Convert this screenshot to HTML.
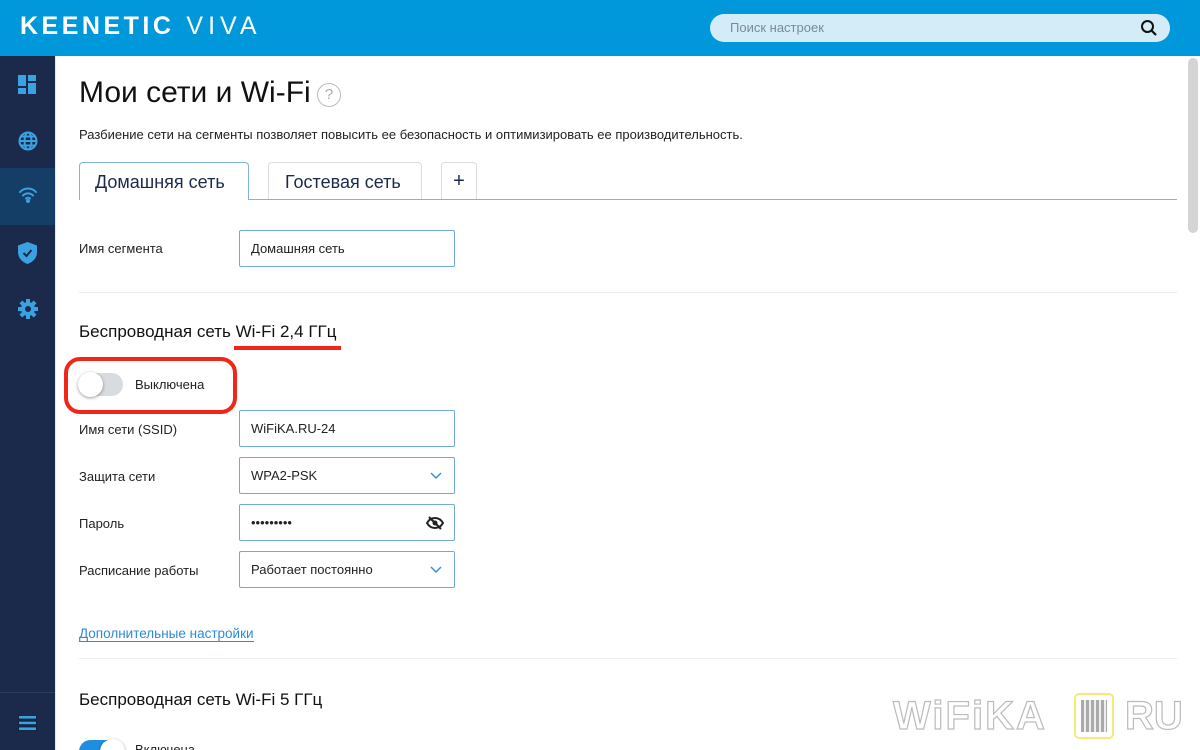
<!DOCTYPE html>
<html style="width:1200px;height:750px;overflow:hidden"><head><meta charset="utf-8"><style>
*{margin:0;padding:0;box-sizing:border-box}
body{width:1200px;height:750px;overflow:hidden;background:#fff;font-family:"Liberation Sans",Arial,sans-serif;color:#1a1a1a;position:relative}
.hdr{position:absolute;left:0;top:0;width:1200px;height:56px;background:#0098db}
.logo{position:absolute;left:20px;top:12px;color:#fff;font-size:25px;font-weight:bold;letter-spacing:3.5px}
.logo span{font-weight:normal;margin-left:12px;letter-spacing:5px}
.search{position:absolute;left:710px;top:14px;width:460px;height:28px;border-radius:14px;background:#d3ecf8;color:#7a8a99;font-size:13px;line-height:28px;padding-left:20px}
.side{position:absolute;left:0;top:56px;width:56px;height:694px;background:#1b2a4a;border-right:1px solid #e3e8ef}
.act{position:absolute;left:0;top:112px;width:55px;height:57px;background:#143e66}
.ic{position:absolute;left:18px}
.abs{position:absolute}
.lbl{position:absolute;left:79px;font-size:13px;color:#222}
.inp{position:absolute;left:239px;width:216px;height:37px;border:1px solid #6fa9e0;border-radius:2px;font-size:13px;line-height:35px;padding-left:11px;color:#222}
.chev{position:absolute;right:12px;top:11px}
.hr{position:absolute;left:79px;width:1098px;height:1px;background:#ececec}
</style></head><body>
<div class="hdr"><div class="logo">KEENETIC<span>VIVA</span></div>
<div class="search">Поиск настроек
<svg class="abs" style="right:12px;top:5px" width="18" height="18" viewBox="0 0 18 18"><circle cx="7.5" cy="7.5" r="5.5" fill="none" stroke="#111" stroke-width="2"/><path d="M11.5 11.5L16 16" stroke="#111" stroke-width="2.2"/></svg></div></div>
<div class="side">
<svg class="ic" style="top:19px" width="19" height="19" viewBox="0 0 19 19" fill="#3aa2e0"><rect x="0" y="0" width="8" height="11"/><rect x="10" y="0" width="8" height="6"/><rect x="0" y="13" width="8" height="6"/><rect x="10" y="8" width="8" height="11"/></svg>
<svg class="ic" style="top:75px" width="20" height="20" viewBox="0 0 20 20" fill="none" stroke="#3aa2e0" stroke-width="2"><circle cx="10" cy="10" r="8.5"/><ellipse cx="10" cy="10" rx="3.5" ry="8.5"/><path d="M1.5 10h17M3 5.5h14M3 14.5h14"/></svg>
<div class="act"></div>
<svg class="ic" style="top:131px" width="20" height="16" viewBox="0 0 20 16" fill="none" stroke="#3aa2e0" stroke-width="2" stroke-linecap="round"><path d="M2 5a11 11 0 0 1 16 0M5 8.5a7 7 0 0 1 10 0M8 11.5a3 3 0 0 1 4 0"/><circle cx="10" cy="14" r="1" fill="#3aa2e0"/></svg>
<svg class="ic" style="top:186px" width="19" height="22" viewBox="0 0 19 22"><path d="M9.5 0L19 3.5V10c0 6-4 10-9.5 12C4 20 0 16 0 10V3.5z" fill="#3aa2e0"/><path d="M5.5 11l3 3 5-6" stroke="#1b2a4a" stroke-width="2" fill="none"/></svg>
<svg class="ic" style="top:243px" width="20" height="20" viewBox="0 0 20 20"><g fill="#3aa2e0"><circle cx="10" cy="10" r="7"/><rect x="8" y="0" width="4" height="20"/><rect x="0" y="8" width="20" height="4"/><rect x="8" y="0" width="4" height="20" transform="rotate(45 10 10)"/><rect x="8" y="0" width="4" height="20" transform="rotate(-45 10 10)"/></g><circle cx="10" cy="10" r="3" fill="#1b2a4a"/></svg>
<div class="abs" style="left:0;top:636px;width:55px;height:1px;background:#2d3d5c"></div>
<svg class="ic" style="top:659px" width="19" height="16" viewBox="0 0 19 16" fill="#3aa2e0" stroke="#0d1a30" stroke-width="0.8"><rect x="0.5" y="0.5" width="18" height="3.5" rx="1"/><rect x="0.5" y="6.2" width="18" height="3.5" rx="1"/><rect x="0.5" y="12" width="18" height="3.5" rx="1"/></svg>
</div>
<div class="abs" style="left:1188px;top:58px;width:10px;height:175px;background:#d4d4d4;border-radius:5px"></div>

<div class="abs" style="left:79px;top:76px;font-size:30px;color:#111">Мои сети и Wi-Fi</div>
<div class="abs" style="left:317px;top:83px;width:24px;height:24px;border:1.5px solid #bbb;border-radius:50%;color:#aaa;font-size:15px;text-align:center;line-height:21px">?</div>
<div class="abs" style="left:79px;top:127px;font-size:13px;color:#222;white-space:nowrap">Разбиение сети на сегменты позволяет повысить ее безопасность и оптимизировать ее производительность.</div>

<div class="abs" style="left:248px;top:199px;width:929px;height:1px;background:#7fb3e3"></div>
<div class="abs" style="left:79px;top:162px;width:170px;height:38px;border:1px solid #7fb3e3;border-bottom:none;border-radius:4px 4px 0 0;background:#fff;font-size:18px;line-height:38px;padding-left:15px;color:#1b2a4a">Домашняя сеть</div>
<div class="abs" style="left:268px;top:162px;width:154px;height:37px;border:1px solid #ddd;border-bottom:none;border-radius:4px 4px 0 0;font-size:18px;line-height:38px;padding-left:16px;color:#1b2a4a">Гостевая сеть</div>
<div class="abs" style="left:441px;top:162px;width:36px;height:37px;border:1px solid #ddd;border-bottom:none;border-radius:4px 4px 0 0;font-size:20px;line-height:36px;text-align:center;color:#1b2a4a">+</div>

<div class="lbl" style="top:241px">Имя сегмента</div>
<div class="inp" style="top:230px">Домашняя сеть</div>
<div class="hr" style="top:292px"></div>

<div class="abs" style="left:79px;top:322px;font-size:17px;color:#111">Беспроводная сеть Wi-Fi 2,4 ГГц</div>
<div class="abs" style="left:234px;top:346px;width:107px;height:4px;background:#f0261b"></div>
<div class="abs" style="left:64px;top:357px;width:173px;height:57px;border:4px solid #f0261b;border-radius:16px"></div>
<div class="abs" style="left:79px;top:373px;width:44px;height:23px;border-radius:12px;background:#d8dbe0"></div>
<div class="abs" style="left:78px;top:372px;width:25px;height:25px;border-radius:50%;background:#fff;box-shadow:0 1px 3px rgba(0,0,0,.4)"></div>
<div class="abs" style="left:135px;top:377px;font-size:13px;color:#222">Выключена</div>

<div class="lbl" style="top:422px">Имя сети (SSID)</div>
<div class="inp" style="top:410px">WiFiKA.RU-24</div>
<div class="lbl" style="top:469px">Защита сети</div>
<div class="inp" style="top:457px">WPA2-PSK<svg class="chev" width="12" height="12" viewBox="0 0 12 12"><path d="M1 4l5 5 5-5" fill="none" stroke="#3a8fd8" stroke-width="1.5"/></svg></div>
<div class="lbl" style="top:516px">Пароль</div>
<div class="inp" style="top:504px">•••••••••<svg class="abs" style="right:10px;top:10px" width="18" height="16" viewBox="0 0 18 16"><path d="M1 8c2-3.5 5-5 8-5s6 1.5 8 5c-2 3.5-5 5-8 5S3 11.5 1 8z" fill="none" stroke="#222" stroke-width="2"/><circle cx="9" cy="8" r="2.5" fill="#222"/><path d="M3 2l12 12" stroke="#222" stroke-width="2"/></svg></div>
<div class="lbl" style="top:563px">Расписание работы</div>
<div class="inp" style="top:551px">Работает постоянно<svg class="chev" width="12" height="12" viewBox="0 0 12 12"><path d="M1 4l5 5 5-5" fill="none" stroke="#3a8fd8" stroke-width="1.5"/></svg></div>

<div class="abs" style="left:79px;top:627px;font-size:13.5px;color:#2e8ad8;border-bottom:1px solid #2e8ad8;line-height:14px">Дополнительные настройки</div>
<div class="hr" style="top:658px"></div>
<div class="abs" style="left:79px;top:690px;font-size:17px;color:#111">Беспроводная сеть Wi-Fi 5 ГГц</div>
<div class="abs" style="left:79px;top:740px;width:44px;height:23px;border-radius:12px;background:#1f8ee0"></div>
<div class="abs" style="left:100px;top:739px;width:25px;height:25px;border-radius:50%;background:#fff;box-shadow:0 1px 3px rgba(0,0,0,.4)"></div>
<div class="abs" style="left:135px;top:742px;font-size:13px;color:#222">Включена</div>

<div class="abs" style="left:893px;top:694px;font-size:40px;font-weight:bold;color:#fff;-webkit-text-stroke:1.2px #bbb;letter-spacing:2px;line-height:44px">WiFiKA</div>
<div class="abs" style="left:1074px;top:693px;width:40px;height:46px;border:2px solid #f5e97a;border-radius:5px"></div>
<div class="abs" style="left:1081px;top:700px;width:26px;height:32px;background:repeating-linear-gradient(90deg,#aaa 0 3px,#eee 3px 5px)"></div>
<div class="abs" style="left:1125px;top:694px;font-size:40px;font-weight:bold;color:#fff;-webkit-text-stroke:1.2px #bbb;line-height:44px">RU</div>
</body></html>
